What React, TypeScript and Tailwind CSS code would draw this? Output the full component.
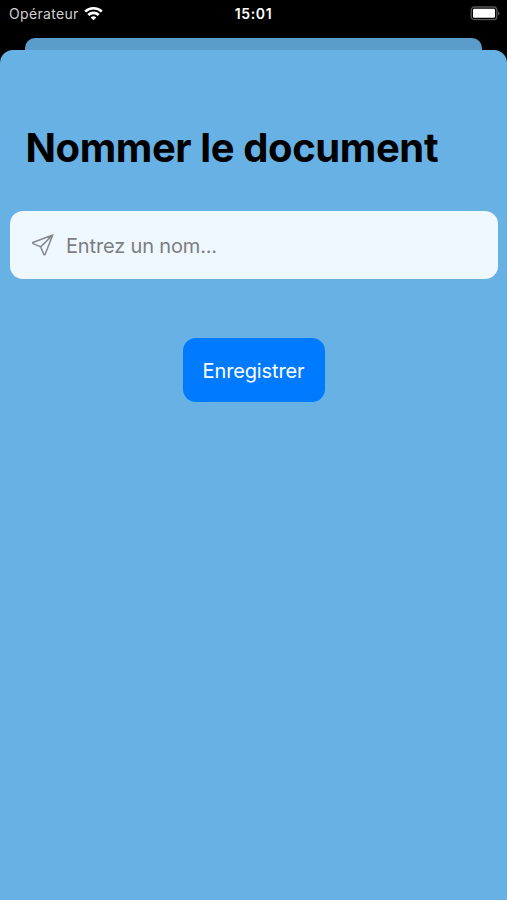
export default function App() {
  return (
    <div className="flex h-[900px] w-[507px] flex-col overflow-hidden bg-black font-['Inter','Liberation_Sans',sans-serif]">
      <header className="grid h-[38px] shrink-0 grid-cols-3 items-start pr-[7px] pl-[9px] pt-[4px] text-white">
        <div className="flex h-5 items-center gap-[5px]">
          <span className="text-[14px] leading-5 tracking-[0.32px] text-[#d0d0d0]">Opérateur</span>
          <svg className="-mt-[2px]" width="19" height="15" viewBox="0 0 19 15" fill="none" stroke="white" strokeWidth="2.7">
            <path d="M1.2 5.6C5.6 1.1 13.4 1.1 17.8 5.6M4.3 9C7.2 6.2 11.8 6.2 14.7 9" />
            <path d="M9.5 14.2L6.7 11.4Q9.5 9.2 12.3 11.4Z" fill="white" stroke="none" />
          </svg>
        </div>
        <span className="-ml-[2px] text-center text-[14px] leading-5 font-semibold tracking-[0.6px]">15:01</span>
        <div className="flex h-5 items-center justify-end">
          <svg className="-mt-[2px]" width="30" height="15" viewBox="0 0 30 15" fill="none">
            <rect x="1.2" y="1" width="25.6" height="12.6" rx="3.2" stroke="#555" strokeWidth="1.4" />
            <rect x="3" y="2.8" width="22" height="9" rx="1.2" fill="white" />
            <path d="M28 5Q31 7.3 28 9.6Z" fill="#555" />
          </svg>
        </div>
      </header>
      <div className="mx-[25px] h-[12px] shrink-0 rounded-t-[10px] bg-[#5b9dca]" />
      <main className="flex grow flex-col rounded-t-[13px] bg-[#67b1e5] px-[10px] pt-[73px]">
        <h1 className="ml-[15.5px] h-[50px] text-[40px] leading-[50px] font-bold tracking-[-0.4px] whitespace-nowrap text-black">Nommer le document</h1>
        <label className="mt-[38px] -mr-px flex h-[68px] items-center rounded-[13px] bg-[#f0f8ff] pl-[21px]">
          <svg width="24" height="24" viewBox="0 0 24 24" fill="none" stroke="#85898d" strokeWidth="1.5" strokeLinejoin="round">
            <path d="M21.8 2L1.8 9.5Q1.3 10.1 2.1 10.6L9.6 13.9L12.9 21.5Q13.5 22.2 14 21.5ZM21.8 2L9.6 13.9" />
          </svg>
          <input className="ml-[11px] w-80 bg-transparent pt-[2px] text-[20px] tracking-[-0.16px] outline-none placeholder:text-[#7b7d80]" placeholder="Entrez un nom..." />
        </label>
        <button className="mt-[59px] h-[64px] w-[142px] self-center rounded-[13px] bg-[#007aff] pt-[2px] text-[20px] tracking-[-0.14px] text-white">Enregistrer</button>
      </main>
    </div>
  );
}
